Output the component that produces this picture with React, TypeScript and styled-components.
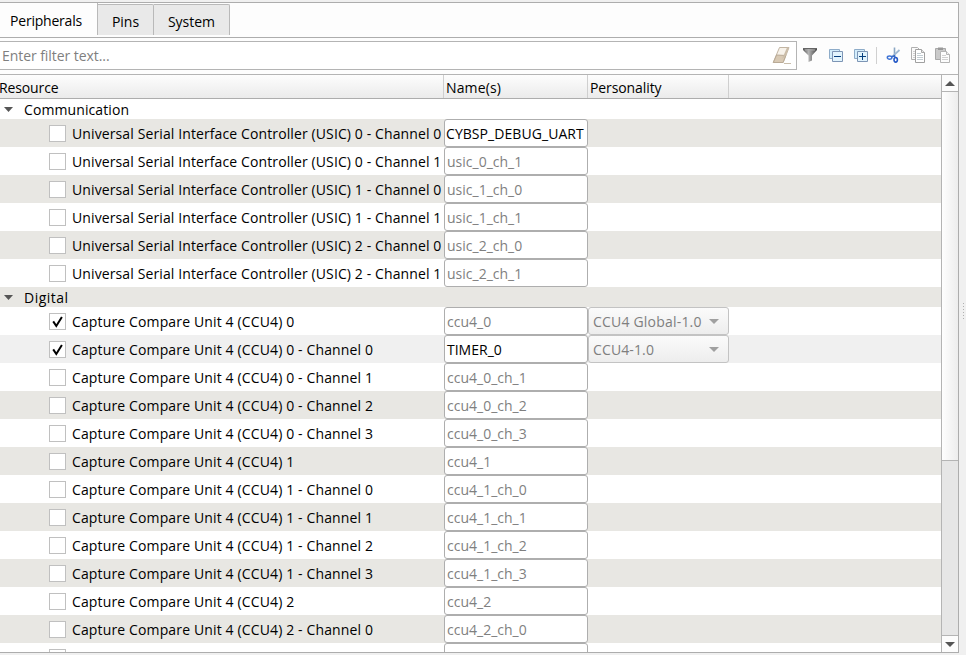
import React from "react";
import styled, { createGlobalStyle } from "styled-components";

const Global = createGlobalStyle`
  * { box-sizing: border-box; }
  html, body { margin: 0; padding: 0; background: #f0f0f0; overflow: hidden; }
  body { font-family: "Open Sans", "Noto Sans", sans-serif; font-size: 14px; color: #000; }
`;

const Page = styled.div`
  width: 966px;
  height: 655px;
  padding-top: 2px;
  display: flex;
  background: #f0f0f0;
  overflow: hidden;
`;

const Panel = styled.div`
  width: 959px;
  height: 651px;
  display: flex;
  flex-direction: column;
  background: #fdfdfd;
  border: solid #adadad;
  border-width: 1px 1px 1px 0;
`;

const TabBar = styled.div`
  height: 35px;
  display: flex;
  align-items: flex-start;
  border-bottom: 1px solid #adadad;
`;

const Tab = styled.div<{ $w: number; $active?: boolean }>`
  width: ${(p) => p.$w}px;
  height: ${(p) => (p.$active ? 32 : 31)}px;
  margin-top: ${(p) => (p.$active ? 0 : 1)}px;
  padding-right: ${(p) => (p.$active ? 5 : 0)}px;
  line-height: ${(p) => (p.$active ? 36 : 34)}px;
  letter-spacing: ${(p) => (p.$active ? -0.22 : 0)}px;
  text-align: center;
  white-space: nowrap;
  background: ${(p) => (p.$active ? "#fdfdfd" : "#e9e9e9")};
  border: solid #b9b9b9;
  border-width: ${(p) => (p.$active ? "0 1px 0 0" : "1px 1px 0 0")};
  border-radius: ${(p) => (p.$active ? "0" : "0 2px 0 0")};
`;

const ToolRow = styled.div`
  height: 36px;
  padding-top: 3px;
  display: flex;
  align-items: flex-start;
`;

const Filter = styled.div`
  width: 797px;
  height: 29px;
  padding: 0 4px 0 2px;
  display: flex;
  align-items: center;
  justify-content: space-between;
  background: #fff;
  border: solid #b4b4b4;
  border-width: 1px 1px 1px 0;
  color: #7f7f7f;
`;

const Icons = styled.div`
  height: 28px;
  padding-left: 5px;
  display: flex;
  align-items: center;
`;

const Icon = styled.svg<{ $gap?: number }>`
  display: block;
  flex: none;
  margin-right: ${(p) => p.$gap ?? 0}px;
`;

const Rule = styled.div`
  width: 1px;
  height: 17px;
  margin-right: 9px;
  background: #d0d0d0;
`;

const TableArea = styled.div`
  height: 578px;
  display: flex;
  border-top: 1px solid #b4b4b4;
`;

const Table = styled.div`
  width: 941px;
  display: flex;
  flex-direction: column;
  overflow: hidden;
  background: #fff;
`;

const HeadRow = styled.div`
  height: 24px;
  flex: none;
  display: flex;
  background: linear-gradient(#fdfdfd, #ebebeb);
  border-bottom: 1px solid #adadad;
`;

const Head = styled.div<{ $w: number; $pad: number; $ls: number }>`
  width: ${(p) => p.$w}px;
  padding-left: ${(p) => p.$pad}px;
  line-height: 25px;
  letter-spacing: ${(p) => p.$ls}px;
  white-space: nowrap;
  border-right: 1px solid #cfcfcf;
`;

const HeadText = styled.span`
  margin-left: -1px;
`;

const Group = styled.div<{ $shade?: boolean }>`
  height: 20px;
  flex: none;
  padding-left: 4px;
  display: flex;
  align-items: center;
  gap: 11px;
  background: ${(p) => (p.$shade ? "#e8e7e3" : "#fff")};
`;

const Row = styled.div<{ $bg: string }>`
  height: 28px;
  flex: none;
  display: flex;
  background: ${(p) => p.$bg};
`;

const Resource = styled.div`
  width: 444px;
  padding-left: 49px;
  display: flex;
  align-items: center;
  gap: 6px;
`;

const Check = styled.div`
  width: 17px;
  height: 17px;
  margin-top: 1px;
  flex: none;
  background: #fff;
  border: 1px solid #c0c0c0;
`;

const Label = styled.span<{ $ls?: number; $drop?: number }>`
  white-space: nowrap;
  line-height: 20px;
  padding-top: ${(p) => p.$drop ?? 2}px;
  letter-spacing: ${(p) => p.$ls ?? 0}px;
`;

const NameBox = styled.div<{ $set?: boolean; $ls?: number }>`
  width: 144px;
  height: 28px;
  padding-left: ${(p) => (p.$ls ? 1 : 2)}px;
  line-height: 27px;
  letter-spacing: ${(p) => p.$ls ?? 0}px;
  white-space: nowrap;
  background: #fff;
  color: ${(p) => (p.$set ? "#000" : "#7f7f7f")};
  border: 1px solid #aeaeae;
  border-radius: 3px;
`;

const Select = styled.div`
  width: 141px;
  height: 28px;
  padding: 0 9px 0 4px;
  display: flex;
  align-items: center;
  justify-content: space-between;
  white-space: nowrap;
  color: #7f7f7f;
  background: linear-gradient(#fbfbfb, #ededed);
  border: 1px solid #c3c3c3;
  border-radius: 3px;
`;

const Scroll = styled.div`
  width: 17px;
  display: flex;
  flex-direction: column;
  border-left: 1px solid #b4b4b4;
  background: #e6e6e6;
`;

const ScrollButton = styled.div`
  height: 16px;
  display: flex;
  align-items: center;
  justify-content: center;
  background: #fcfcfc;
`;

const Thumb = styled.div`
  height: 370px;
  border: solid #b4b4b4;
  border-width: 1px 0;
  background: linear-gradient(90deg, #fefefe, #ededed);
`;

const Track = styled.div`
  height: 175px;
  border-bottom: 1px solid #b4b4b4;
`;

const Grip = styled.div`
  padding: 301px 0 0 4px;
  display: flex;
  flex-direction: column;
  gap: 2px;
`;

const Dot = styled.i`
  width: 1px;
  height: 1px;
  background: #b0b0b0;
`;

const Arrow = ({ up, color = "#555", w = 10 }: { up?: boolean; color?: string; w?: number }) => (
  <Icon width={w} height="5" viewBox="0 0 10 5" preserveAspectRatio="none">
    <path d={up ? "M0 5L5 0L10 5Z" : "M0 0H10L5 5Z"} fill={color} />
  </Icon>
);

const Tick = () => (
  <Icon width="15" height="15" viewBox="0 0 15 15">
    <path d="M3.2 7.4L6.3 12L11.9 3" fill="none" stroke="#000" strokeWidth="2" />
  </Icon>
);

const Eraser = () => (
  <Icon width="20" height="19" viewBox="0 0 20 19">
    <path d="M7.5 1.5H17L11.2 16.5H1.2Z" fill="#f7f2ea" stroke="#c2b5a3" />
    <path d="M4.6 9L13.8 9.5L11 16.5H1.4Z" fill="#d8c9b4" stroke="#b9aa96" />
    <path d="M13.8 9.5L17 1.5L15 1.5L10 13Z" fill="#cbbda9" />
    <path d="M12 17.5H19" stroke="#c8bdab" />
  </Icon>
);

const Funnel = () => (
  <Icon width="16" height="16" viewBox="0 0 16 16" $gap={10}>
    <defs>
      <linearGradient id="funnel">
        <stop offset="0" stopColor="#555" />
        <stop offset="0.4" stopColor="#b5b5b5" />
        <stop offset="1" stopColor="#484848" />
      </linearGradient>
    </defs>
    <path d="M1 1H15V3L10 8.5V13.5L6.5 15V8.5L1 3Z" fill="url(#funnel)" />
    <path d="M1 1.5H15" stroke="#666" />
    <path d="M3 3H13" stroke="#a8a8a8" />
  </Icon>
);

const Boxes = ({ plus, gap }: { plus?: boolean; gap: number }) => (
  <Icon width="16" height="16" viewBox="0 0 16 16" $gap={gap}>
    <path d="M1.5 11.5V2.5H11.5V11.5Z" fill="#d3edfb" stroke="#8eacc9" />
    <path d="M4.5 4.5H14.5V14.5H4.5Z" fill="#e2f4fd" stroke="#7d95b5" />
    <path d="M6 9.5H13" stroke="#063f7e" />
    {plus && <path d="M9.5 6V13" stroke="#063f7e" />}
  </Icon>
);

const Scissors = () => (
  <Icon width="16" height="16" viewBox="0 0 16 16" $gap={8}>
    <path d="M8.5 0.5V9" stroke="#8ba7c4" strokeWidth="1.6" fill="none" />
    <path d="M13.5 3L6 9.8" stroke="#9fb8d2" strokeWidth="1.8" fill="none" />
    <ellipse cx="3.6" cy="10.6" rx="2.3" ry="1.6" fill="none" stroke="#3f74d6" strokeWidth="1.5" />
    <ellipse cx="9.7" cy="12.8" rx="1.7" ry="2.3" fill="none" stroke="#2458c6" strokeWidth="1.6" />
    <path d="M5.5 9.8L8.5 8.7L9.2 10.5" stroke="#3568c8" strokeWidth="1.3" fill="none" />
  </Icon>
);

const Copy = () => (
  <Icon width="16" height="16" viewBox="0 0 16 16" $gap={9}>
    <path d="M1.5 0.5H7.5L10.5 3.5V12.5H1.5Z" fill="#fafafa" stroke="#b0b0b0" />
    <path d="M3 4.5H5M3 6.5H5M3 8.5H5M3 10.5H5" stroke="#cfcfcf" />
    <path d="M5.5 2.5H11.5L14.5 5.5V15.5H5.5Z" fill="#fff" stroke="#a0a0a0" />
    <path d="M11.5 2.5V5.5H14.5" fill="#e6e6e6" stroke="#a8a8a8" />
    <path d="M7 6.5H11M7 8.5H13M7 10.5H13M7 12.5H13" stroke="#c3cdd3" />
  </Icon>
);

const Paste = () => (
  <Icon width="16" height="16" viewBox="0 0 16 16">
    <path d="M0.5 1.5H10.5V12.5H0.5Z" fill="#c9c9c9" stroke="#a8a8a8" />
    <path d="M3 0.5H8V3H3Z" fill="#999" />
    <path d="M5.5 4.5H11.5L14.5 7.5V15.5H5.5Z" fill="#fcfcfc" stroke="#b4b4b4" />
    <path d="M11.5 4.5V7.5H14.5" fill="#eee" stroke="#b4b4b4" />
    <path d="M7 8.5H11M7 10.5H13M7 12.5H13" stroke="#d0d0d0" />
  </Icon>
);

type Item = {
  name: string;
  value: string;
  on?: boolean;
  set?: boolean;
  pick?: string;
  pickLs?: number;
  bg?: string;
  ls?: number;
};

const usic: Item[] = [0, 1, 2].flatMap((u) =>
  [0, 1].map((c) => ({
    name: `Universal Serial Interface Controller (USIC) ${u} - Channel ${c}`,
    value: u + c === 0 ? "CYBSP_DEBUG_UART" : `usic_${u}_ch_${c}`,
    set: u + c === 0,
    ls: u + c === 0 ? 0.06 : 0,
  }))
);

const ccu: Item[] = [
  { name: "Capture Compare Unit 4 (CCU4) 0", value: "ccu4_0", on: true, pick: "CCU4 Global-1.0", pickLs: 0.2 },
  {
    name: "Capture Compare Unit 4 (CCU4) 0 - Channel 0",
    value: "TIMER_0",
    on: true,
    set: true,
    pick: "CCU4-1.0",
    pickLs: 0.12,
    bg: "#f0f0f0",
  },
  ...[1, 2, 3].map((c) => ({ name: `Capture Compare Unit 4 (CCU4) 0 - Channel ${c}`, value: `ccu4_0_ch_${c}` })),
  { name: "Capture Compare Unit 4 (CCU4) 1", value: "ccu4_1" },
  ...[0, 1, 2, 3].map((c) => ({ name: `Capture Compare Unit 4 (CCU4) 1 - Channel ${c}`, value: `ccu4_1_ch_${c}` })),
  { name: "Capture Compare Unit 4 (CCU4) 2", value: "ccu4_2" },
  { name: "Capture Compare Unit 4 (CCU4) 2 - Channel 0", value: "ccu4_2_ch_0" },
  { name: "", value: "" },
];

const ItemRow = ({ item, shade, ls }: { item: Item; shade: boolean; ls: number }) => (
  <Row $bg={item.bg ?? (shade ? "#e8e7e3" : "#fff")}>
    <Resource>
      <Check>{item.on && <Tick />}</Check>
      <Label $ls={ls}>{item.name}</Label>
    </Resource>
    <NameBox $set={item.set} $ls={item.ls}>{item.value}</NameBox>
    {item.pick && (
      <Select>
        <Label $ls={item.pickLs}>{item.pick}</Label>
        <Arrow color="#a0a0a0" />
      </Select>
    )}
  </Row>
);

export default function App() {
  return (
    <>
      <Global />
      <Page>
        <Panel>
          <TabBar>
            <Tab $w={98} $active>Peripherals</Tab>
            <Tab $w={56}>Pins</Tab>
            <Tab $w={76}>System</Tab>
          </TabBar>
          <ToolRow>
            <Filter>
              <Label $ls={-0.06} $drop={0}>Enter filter text...</Label>
              <Eraser />
            </Filter>
            <Icons>
              <Funnel />
              <Boxes gap={9} />
              <Boxes plus gap={7} />
              <Rule />
              <Scissors />
              <Copy />
              <Paste />
            </Icons>
          </ToolRow>
          <TableArea>
            <Table>
              <HeadRow>
                <Head $w={444} $pad={0} $ls={-0.12}><HeadText>Resource</HeadText></Head>
                <Head $w={144} $pad={2} $ls={0.15}>Name(s)</Head>
                <Head $w={141} $pad={2} $ls={-0.1}>Personality</Head>
              </HeadRow>
              <Group><Arrow w={9} /><Label $ls={0.1}>Communication</Label></Group>
              {usic.map((it, i) => <ItemRow key={i} item={it} shade={i % 2 === 0} ls={0.112} />)}
              <Group $shade><Arrow w={9} /><Label $ls={0.5}>Digital</Label></Group>
              {ccu.map((it, i) => <ItemRow key={i} item={it} shade={i % 2 === 1} ls={0.137} />)}
            </Table>
            <Scroll>
              <ScrollButton><Arrow up /></ScrollButton>
              <Thumb />
              <Track />
              <ScrollButton><Arrow /></ScrollButton>
            </Scroll>
          </TableArea>
        </Panel>
        <Grip>{[0, 1, 2, 3, 4, 5].map((i) => <Dot key={i} />)}</Grip>
      </Page>
    </>
  );
}
